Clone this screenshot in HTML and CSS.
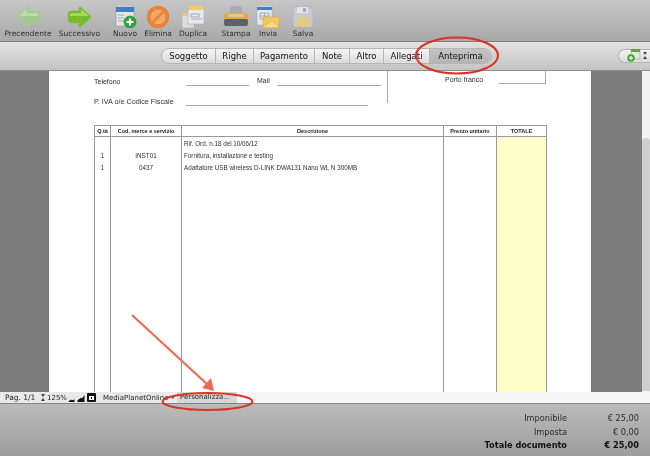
FILE: index.html
```html
<!DOCTYPE html>
<html lang="it">
<head>
    <meta charset="UTF-8">
    <title>Anteprima documento</title>
    <link rel="stylesheet" href="styles.css">
</head>
<body>
    <div class="window">
        <div class="toolbar">
            <div class="tool">
                <svg width="26" height="22" viewBox="0 0 26 22"><path d="M3 11 13 2v4h8q3 0 3 3v4q0 3-3 3h-8v4z" fill="#a6c991" stroke="#a6c991" stroke-width="2.500" stroke-linejoin="round"/><path d="M4 10 12 3v4h9q2 0 2 2v1z" fill="#bedaab"/></svg>
                <span>Precendente</span>
            </div>
            <div class="tool">
                <svg width="26" height="22" viewBox="0 0 26 22"><path d="M23 11 13 2v4H5Q2 6 2 9v4q0 3 3 3h8v4z" fill="#78bb2c" stroke="#78bb2c" stroke-width="2.500" stroke-linejoin="round"/><path d="M22 10 14 3v4H5Q3 7 3 9v1z" fill="#a2d65f"/></svg>
                <span>Successivo</span>
            </div>
            <div class="tool">
                <svg width="24" height="22" viewBox="0 0 24 22"><rect x="3" y="0" width="18" height="20" fill="#e6e6e6" stroke="#8f98a0" stroke-width=".6"/><rect x="3" y="1" width="18" height="5" fill="#3f7fc4"/><path d="M5 9h6M5 12h6M5 15h6" stroke="#a4a9ae"/><circle cx="17" cy="16" r="6" fill="#2aa83a" stroke="#157a25" stroke-width=".6"/><path d="M17 12.500v7M13.500 16h7" stroke="#fff" stroke-width="2.200"/></svg>
                <span>Nuovo</span>
            </div>
            <div class="tool">
                <svg width="24" height="22" viewBox="0 0 24 22"><circle cx="12" cy="11" r="10.800" fill="#ee8433" stroke="#d9701f" stroke-width=".6"/><circle cx="12" cy="11" r="6.500" fill="#f2a667" stroke="#f5b888" stroke-width="1.200"/><path d="m7 16 10-10" stroke="#ee8433" stroke-width="2.500"/></svg>
                <span>Elimina</span>
            </div>
            <div class="tool">
                <svg width="24" height="22" viewBox="0 0 24 22"><rect x="1" y="7" width="12" height="15" fill="#d9dde2" stroke="#a8aeb5" stroke-width=".6"/><rect x="1" y="7" width="12" height="3" fill="#e6c67a"/><rect x="7" y="0" width="16" height="18" fill="#e6eaee" stroke="#a8aeb5" stroke-width=".6"/><rect x="7" y="0" width="16" height="4" fill="#f2cb62"/><path d="M10 8h8v3h-8zM10 13h11" fill="none" stroke="#9ca9b8"/></svg>
                <span>Duplica</span>
            </div>
            <div class="tool">
                <svg width="26" height="22" viewBox="0 0 26 22"><rect x="7" y="0" width="12" height="9" rx="2" fill="#a9adb1"/><rect x="1" y="7" width="24" height="8" rx="3" fill="#e5a93e"/><rect x="5" y="8" width="16" height="3" rx="1" fill="#d9c9a0"/><rect x="1" y="13" width="24" height="7" rx="2" fill="#59636c"/></svg>
                <span>Stampa</span>
            </div>
            <div class="tool">
                <svg width="24" height="22" viewBox="0 0 24 22"><rect x="1" y="0" width="15" height="19" fill="#e7e9eb" stroke="#a8aeb5" stroke-width=".6"/><rect x="1" y="1" width="15" height="3" fill="#3f7fc4"/><path d="M4 7h9v6H4zM8.500 7v6M4 10h9" fill="none" stroke="#a1a6ab"/><path d="M7 11h16v11H7z" fill="#f3c75b" stroke="#d4a33a" stroke-width=".5"/><path d="m7 21 9-6 7 6" fill="#f7dc8c" stroke="#d4a33a" stroke-width=".5"/></svg>
                <span>Invia</span>
            </div>
            <div class="tool">
                <svg width="22" height="22" viewBox="0 0 22 22"><path d="M1 1h17l3 3v17H1z" fill="#c5cbd3" stroke="#aab0b8" stroke-width=".6"/><rect x="5" y="1" width="11" height="6" fill="#e3e5e8"/><rect x="11" y="2" width="3" height="4" fill="#a6acb4"/><rect x="4" y="11" width="14" height="10" fill="#e0c98a"/></svg>
                <span>Salva</span>
            </div>
        </div>

        <div class="tabbar">
            <div class="tabs">
                <div class="tab">Soggetto</div>
                <div class="tab">Righe</div>
                <div class="tab">Pagamento</div>
                <div class="tab">Note</div>
                <div class="tab">Altro</div>
                <div class="tab">Allegati</div>
                <div class="tab active">Anteprima</div>
            </div>
            <div class="action-btn">
                <svg width="14" height="13" viewBox="0 0 14 13"><rect x="4" y="0" width="9" height="10" fill="#e6e6e6" stroke="#8a9a80" stroke-width=".5"/><rect x="4" y="0" width="9" height="3" fill="#6aa33c"/><circle cx="4" cy="9" r="3.800" fill="#4aa82e"/><path d="M4 7v4M2 9h4" stroke="#fff" stroke-width="1.200"/></svg>
                <span class="updown"></span>
            </div>
        </div>

        <div class="viewer">
            <div class="page">
                <div class="doc-top">
                    <div class="doc-fields">
                        <div class="field">
                            <span class="field-label">Telefono</span>
                            <span class="rule rule-tel"></span>
                            <span class="field-mail">Mail</span>
                            <span class="rule rule-mail"></span>
                        </div>
                        <div class="field field-iva">
                            <span class="field-label">P. IVA o/e Codice Fiscale</span>
                            <span class="rule rule-iva"></span>
                        </div>
                    </div>
                    <div class="doc-porto">
                        <div class="porto-box">
                            <span>Porto franco</span>
                            <span class="rule rule-porto"></span>
                        </div>
                    </div>
                </div>

                <table class="doc-table">
                    <colgroup>
                        <col class="col-qty">
                        <col class="col-code">
                        <col class="col-desc">
                        <col class="col-price">
                        <col class="col-total">
                    </colgroup>
                    <thead>
                        <tr>
                            <th>Q.tà</th>
                            <th>Cod. merce e servizio</th>
                            <th>Descrizione</th>
                            <th>Prezzo unitario</th>
                            <th>TOTALE</th>
                        </tr>
                    </thead>
                    <tbody>
                        <tr>
                            <td></td>
                            <td></td>
                            <td class="left">Rif. Ord. n.18 del 10/06/12</td>
                            <td></td>
                            <td class="total"></td>
                        </tr>
                        <tr>
                            <td>1</td>
                            <td>INST01</td>
                            <td class="left">Fornitura, installazione e testing</td>
                            <td></td>
                            <td class="total"></td>
                        </tr>
                        <tr>
                            <td>1</td>
                            <td>0437</td>
                            <td class="left">Adattatore USB wireless D-LINK DWA131 Nano WL N 300MB</td>
                            <td></td>
                            <td class="total"></td>
                        </tr>
                        <tr class="filler">
                            <td></td>
                            <td></td>
                            <td></td>
                            <td></td>
                            <td class="total"></td>
                        </tr>
                    </tbody>
                </table>
            </div>
            <div class="scrollbar"><div class="thumb"></div></div>
        </div>

        <div class="statusbar">
            <span class="pager">Pag. 1/1</span>
            <span class="updown dark"></span>
            <span class="zoom-val">125%</span>
            <span class="zoom-icons">
                <svg width="7" height="5" viewBox="0 0 7 6"><path d="M0 6V5l3-2 1 1 3-1v3z" fill="#111"/></svg>
                <svg width="8" height="7" viewBox="0 0 8 8"><path d="M0 8V6l4-3 1 1 3-4v8z" fill="#111"/></svg>
                <svg width="9" height="9" viewBox="0 0 9 9"><rect width="9" height="9" rx="1" fill="#111"/><rect x="2" y="3" width="5" height="4" fill="#fff"/><rect x="4" y="4" width="1" height="2" fill="#111"/></svg>
            </span>
            <span class="layout-name">MediaPlanetOnline</span>
            <span class="caret"></span>
            <span class="customize">Personalizza...</span>
        </div>

        <div class="summary">
            <div class="summary-grid">
                <span>Imponibile</span><span>€ 25,00</span>
                <span>Imposta</span><span>€ 0,00</span>
                <strong>Totale documento</strong><strong>€ 25,00</strong>
            </div>
        </div>

        <svg class="marks" width="650" height="456" viewBox="0 0 650 456">
            <ellipse cx="457" cy="55.500" rx="41" ry="18" fill="none" stroke="#d93324" stroke-width="2"/>
            <ellipse cx="207.500" cy="401.500" rx="45" ry="8.500" fill="none" stroke="#d93324" stroke-width="2"/>
            <path d="M132 315 208 385" stroke="#ee6a55" stroke-width="2.200"/>
            <path d="M214 391 202 388 211 378z" fill="#ee6a55"/>
        </svg>
    </div>
</body>
</html>
```

FILE: styles.css
```css
body {
    margin: 0;
    font-family: "DejaVu Sans", sans-serif;
    color: #222;
}

/* the source shot is a soft upscale, so everything gets a slight blur */
.window {
    position: relative;
    display: flex;
    flex-direction: column;
    width: 650px;
    height: 456px;
    overflow: hidden;
    background: #7c7c7c;
    filter: blur(.35px);
}

/* Toolbar */
.toolbar {
    display: grid;
    grid-template-columns: 50px 53px 38px 28px 42px 44px 20px 50px;
    height: 42px;
    padding-left: 3px;
    box-sizing: border-box;
    background: linear-gradient(#c6c6c6, #a9a9a9);
    border-bottom: 1px solid #7f7f7f;
}

.tool {
    display: flex;
    flex-direction: column;
    align-items: center;
    padding-top: 6px;
    min-width: 0;
}

.tool span {
    margin-top: 1px;
    font-size: 7.500px;
    line-height: 10px;
    color: #2e2e2e;
    white-space: nowrap;
}

.tool svg {
    flex: none;
}

/* Tab strip */
.tabbar {
    position: relative;
    display: flex;
    justify-content: space-between;
    align-items: center;
    height: 29px;
    padding: 0 0 1px 161px;
    box-sizing: border-box;
    background: linear-gradient(#e2e2e2, #c4c4c4);
    border-bottom: 1px solid #8f8f8f;
}

.tabs {
    display: grid;
    grid-template-columns: 53px 38px 61px 35px 34px 46px 62px;
    height: 14px;
    border: 1px solid #b4b4b4;
    border-radius: 8px;
    background: linear-gradient(#f4f4f4, #dcdcdc);
}

.tab {
    border-left: 1px solid #b4b4b4;
    font-size: 8.500px;
    line-height: 14px;
    text-align: center;
    color: #111;
}

.tab:first-child {
    border-left: none;
}

.tab.active {
    border-radius: 0 8px 8px 0;
    background: linear-gradient(#c4c4c4, #b4b4b4);
}

.action-btn {
    display: flex;
    align-items: center;
    gap: 2px;
    width: 32px;
    height: 14px;
    padding-left: 8px;
    box-sizing: border-box;
    border: 1px solid #b4b4b4;
    border-right: none;
    border-radius: 8px 0 0 8px;
    background: linear-gradient(#f4f4f4, #dcdcdc);
}

.updown {
    display: inline-block;
    width: 0;
    height: 1px;
    border-left: 2px solid transparent;
    border-right: 2px solid transparent;
    border-top: 3px solid #444;
    border-bottom: 3px solid #444;
}

/* Document viewer */
.viewer {
    display: flex;
    justify-content: space-between;
    height: 321px;
    padding-left: 49px;
    background: #7c7c7c;
    overflow: hidden;
}

.page {
    width: 542px;
    padding-left: 45px;
    box-sizing: border-box;
    background: #fff;
    font-family: "Liberation Sans", sans-serif;
    color: #333;
}

.doc-top {
    display: flex;
    height: 32px;
    margin-bottom: 22px;
}

.doc-fields {
    width: 293px;
}

.field {
    display: flex;
    align-items: flex-end;
    height: 15px;
    font-size: 7px;
    line-height: 9px;
}

.field-iva {
    height: 20px;
    font-size: 7.200px;
}

.field-label {
    width: 92px;
    flex: none;
}

.field-mail {
    margin: 0 7px 1px 8px;
}

.rule {
    display: block;
    height: 1px;
    background: #aaa;
}

.rule-tel {
    width: 63px;
}

.rule-mail {
    width: 104px;
}

.rule-iva {
    width: 182px;
}

.doc-porto {
    width: 158px;
    border-left: 1px solid #aaa;
}

.porto-box {
    display: flex;
    justify-content: space-between;
    align-items: flex-end;
    height: 13px;
    padding-left: 57px;
    border-right: 1px solid #aaa;
    font-size: 7px;
    line-height: 9px;
}

.rule-porto {
    width: 46px;
}

.doc-table {
    width: 452px;
    table-layout: fixed;
    border-collapse: collapse;
    font-size: 6.300px;
}

.col-qty { width: 16px; }
.col-code { width: 71px; }
.col-desc { width: 262px; }
.col-price { width: 53px; }
.col-total { width: 50px; }

.doc-table th {
    height: 10px;
    padding: 0;
    border: 1px solid #999;
    font-size: 5.500px;
    color: #222;
}

.doc-table td {
    height: 12px;
    padding: 0;
    border-left: 1px solid #999;
    border-right: 1px solid #999;
    text-align: center;
}

.doc-table td.left {
    padding-left: 2px;
    text-align: left;
    white-space: nowrap;
}

.doc-table td.total {
    background: #ffffcc;
}

.doc-table .filler td {
    height: 240px;
}

.scrollbar {
    width: 8px;
    padding-top: 67px;
    background: #f2f2f2;
}

.thumb {
    height: 253px;
    border-radius: 4px 4px 0 0;
    background: #cfcfcf;
}

/* Status row under the page */
.statusbar {
    display: flex;
    align-items: center;
    height: 11px;
    padding-left: 5px;
    background: linear-gradient(90deg, #e9e9e9 150px, #f6f6f6 240px);
    font-size: 7px;
    color: #222;
    white-space: nowrap;
}

.pager {
    width: 36px;
    font-size: 7.500px;
}

.updown.dark {
    margin-right: 2px;
}

.zoom-val {
    width: 21px;
}

.zoom-icons {
    display: flex;
    align-items: flex-end;
    gap: 2px;
    width: 35px;
}

.layout-name {
    width: 68px;
}

.caret {
    width: 0;
    height: 0;
    margin-right: 2px;
    border-left: 2px solid transparent;
    border-right: 2px solid transparent;
    border-top: 3px solid #444;
}

.customize {
    width: 57px;
    padding-left: 3px;
    line-height: 11px;
    background: #d6d6d6;
}

/* Totals */
.summary {
    display: flex;
    justify-content: flex-end;
    flex: 1;
    padding: 8px 11px 0 0;
    border-top: 1px solid #858585;
    background: linear-gradient(#bbbbbb, #9d9d9d);
}

.summary-grid {
    display: grid;
    grid-template-columns: auto 72px;
    grid-auto-rows: 13.500px;
    font-size: 8.200px;
    line-height: 13.500px;
    text-align: right;
    color: #2b2b2b;
}

.summary-grid strong {
    color: #111;
}

/* Red annotations drawn over the screenshot */
.marks {
    position: absolute;
    top: 0;
    left: 0;
    pointer-events: none;
}
```
